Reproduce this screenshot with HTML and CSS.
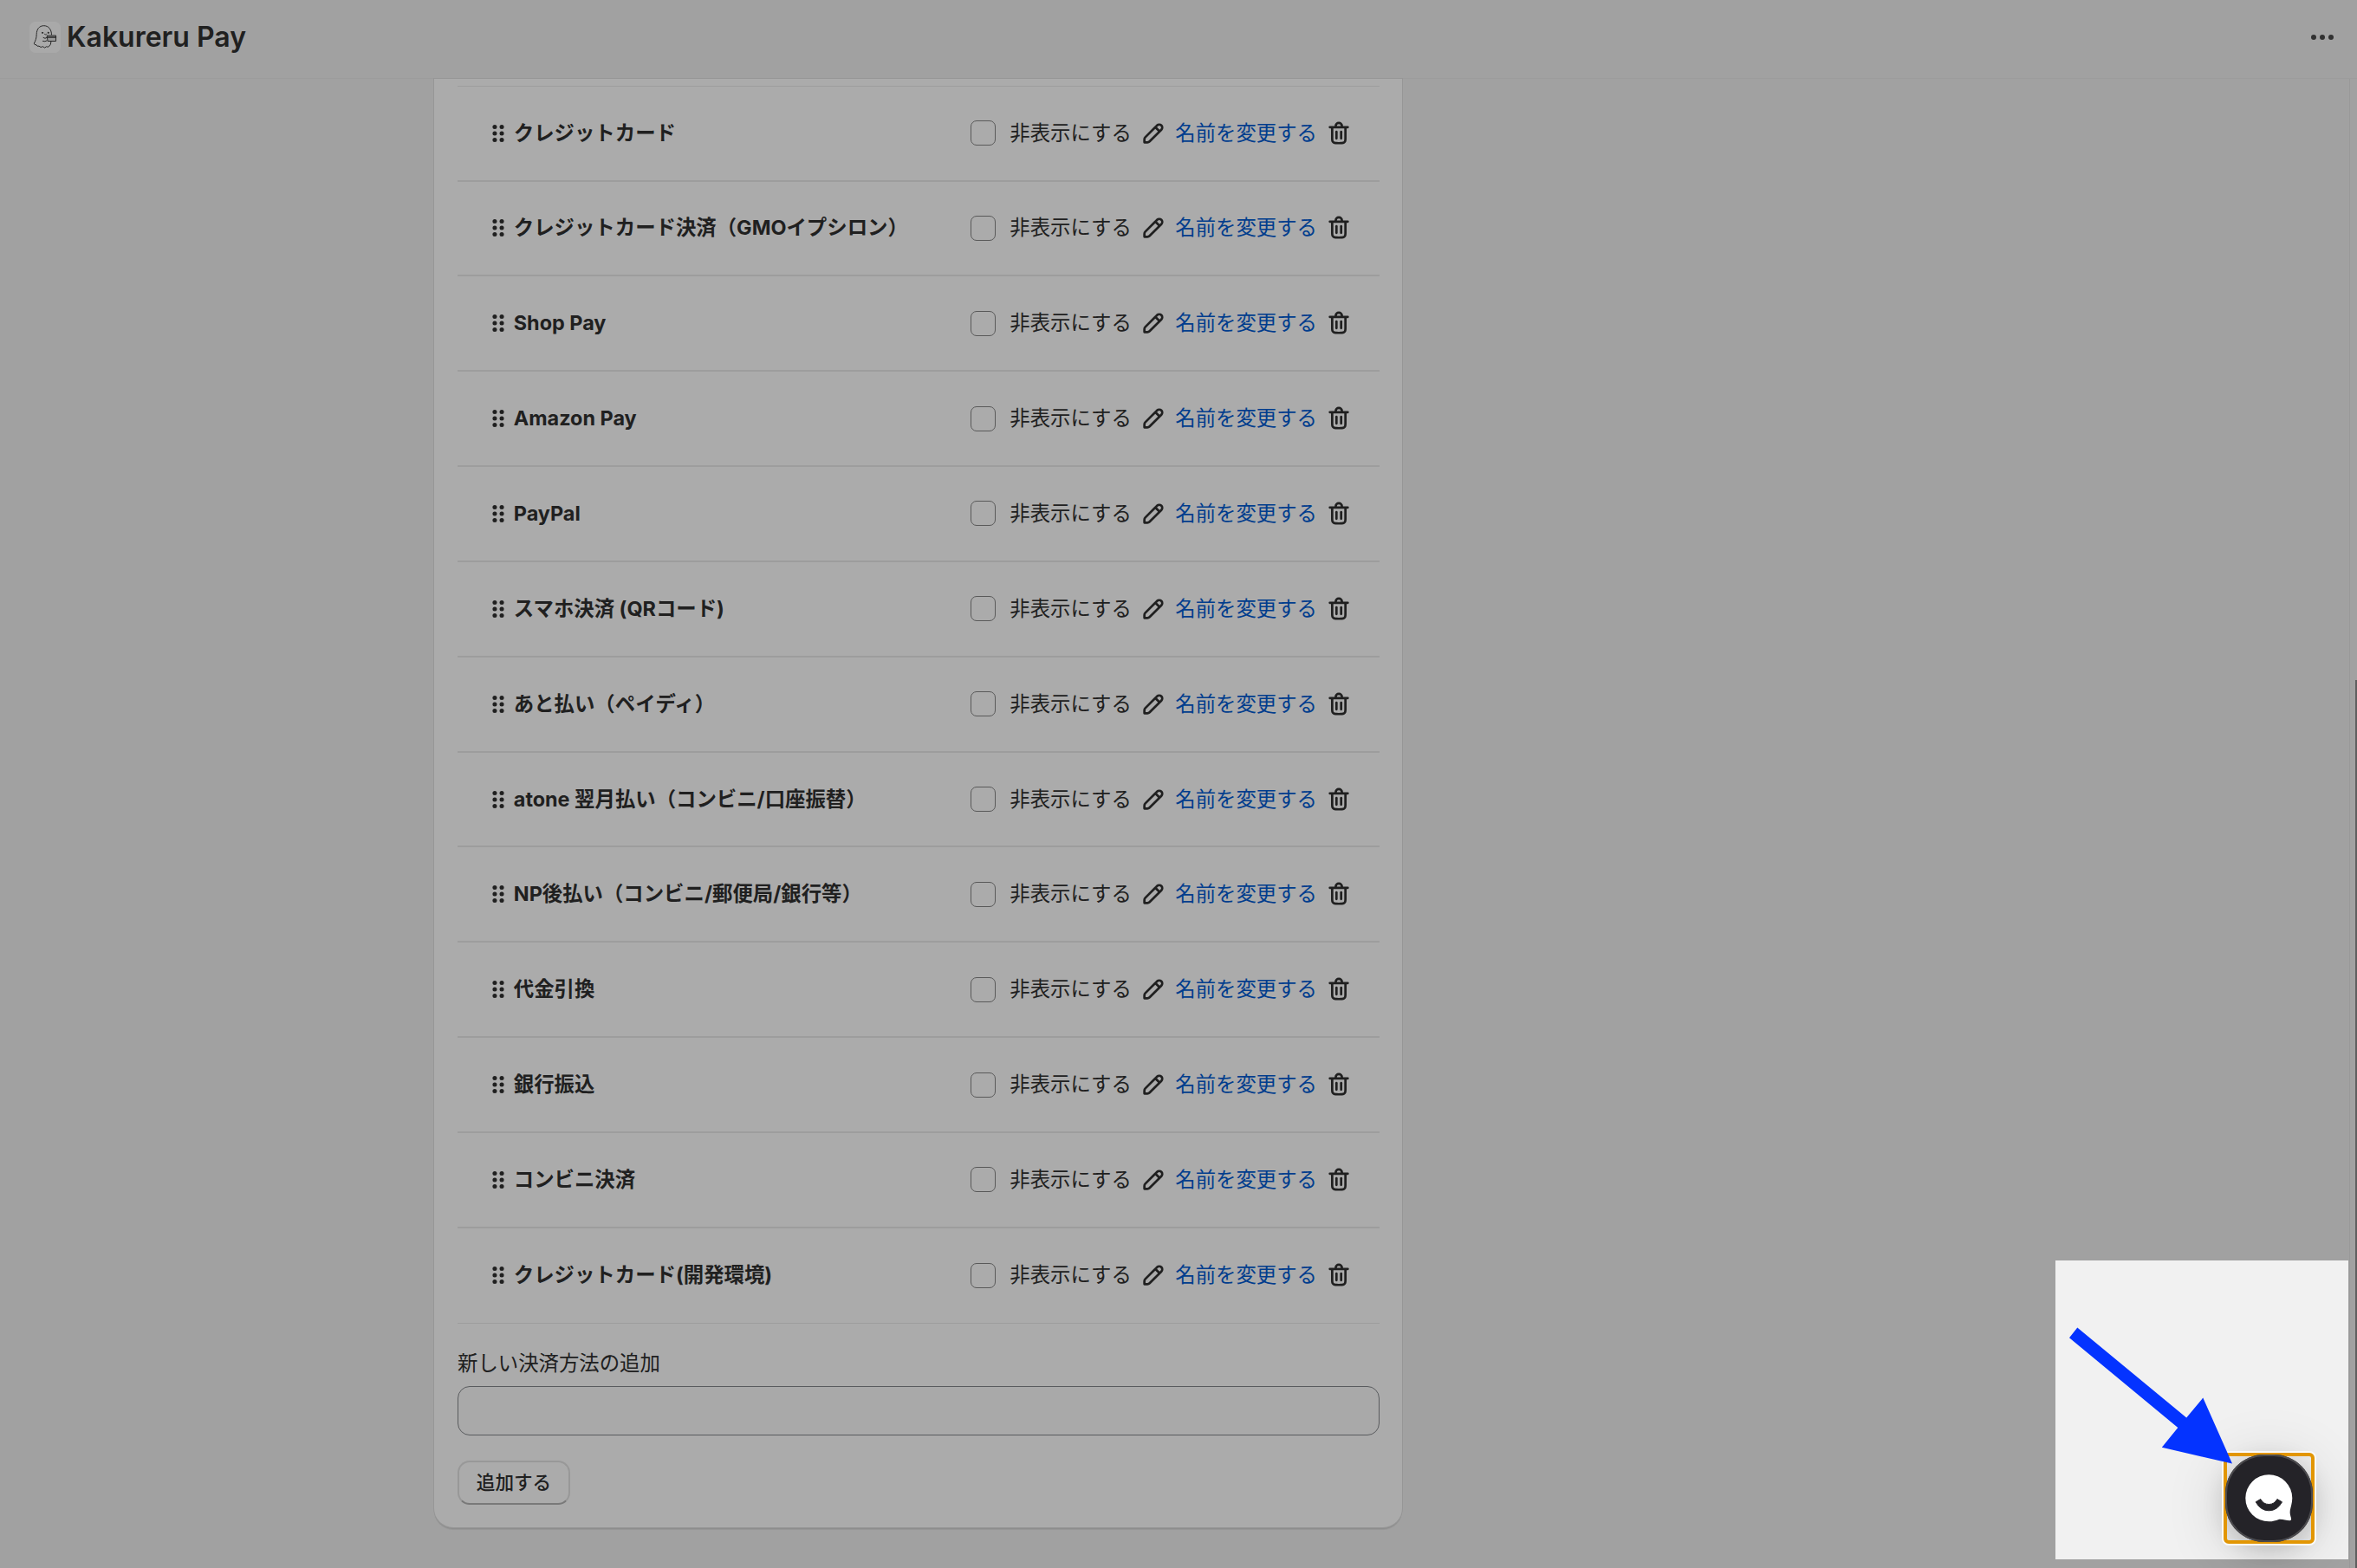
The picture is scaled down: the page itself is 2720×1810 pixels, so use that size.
FILE: index.html
```html
<!DOCTYPE html>
<html lang="ja">
<head>
<meta charset="utf-8">
<title>Kakureru Pay</title>
<link rel="stylesheet" href="styles.css">
</head>
<body>
<svg width="0" height="0" class="defs" aria-hidden="true">
  <symbol id="drag" viewBox="0 0 20 20">
    <circle cx="7.75" cy="5.8" r="1.4"/><circle cx="12.25" cy="5.8" r="1.4"/>
    <circle cx="7.75" cy="10" r="1.4"/><circle cx="12.25" cy="10" r="1.4"/>
    <circle cx="7.75" cy="14.2" r="1.4"/><circle cx="12.25" cy="14.2" r="1.4"/>
  </symbol>
  <symbol id="edit" viewBox="0 0 20 20">
    <path fill-rule="evenodd" d="M15.655 4.344a2.695 2.695 0 0 0-3.81 0l-.599.599-.009-.009-1.06 1.06.008.01-5.88 5.88a2.75 2.75 0 0 0-.805 1.944v1.922a.75.75 0 0 0 .75.75h1.922a2.75 2.75 0 0 0 1.944-.806l7.54-7.539a2.695 2.695 0 0 0 0-3.81Zm-4.409 2.72-5.88 5.88a1.25 1.25 0 0 0-.366.884v1.172h1.172c.331 0 .65-.132.883-.366l5.88-5.88-1.689-1.69Zm2.75.629.599-.599a1.195 1.195 0 1 0-1.69-1.689l-.598.599 1.69 1.689Z"/>
  </symbol>
  <symbol id="trash" viewBox="0 0 20 20">
    <path d="M11.5 8.25a.75.75 0 0 1 .75.75v4.25a.75.75 0 0 1-1.5 0v-4.25a.75.75 0 0 1 .75-.75Z"/>
    <path d="M9.25 9a.75.75 0 0 0-1.5 0v4.25a.75.75 0 0 0 1.5 0v-4.25Z"/>
    <path fill-rule="evenodd" d="M7.25 5.25a2.75 2.75 0 0 1 5.5 0h3a.75.75 0 0 1 0 1.5h-.75v5.45c0 1.68 0 2.52-.327 3.162a3 3 0 0 1-1.311 1.311c-.642.327-1.482.327-3.162.327h-.4c-1.68 0-2.52 0-3.162-.327a3 3 0 0 1-1.311-1.311c-.327-.642-.327-1.482-.327-3.162v-5.45h-.75a.75.75 0 0 1 0-1.5h3Zm1.5 0a1.25 1.25 0 1 1 2.5 0h-2.5Zm-2.25 1.5h7v5.45c0 .865-.001 1.423-.036 1.848-.033.408-.09.559-.128.633a1.5 1.5 0 0 1-.655.655c-.074.038-.225.095-.633.128-.425.035-.983.036-1.848.036h-.4c-.865 0-1.423-.001-1.848-.036-.408-.033-.559-.09-.633-.128a1.5 1.5 0 0 1-.656-.655c-.037-.074-.094-.225-.127-.633-.035-.425-.036-.983-.036-1.848v-5.45Z"/>
  </symbol>
</svg>

<header class="topbar">
  <span class="app-icon">
    <svg viewBox="0 0 36 36" fill="none" stroke="#3c3c3c" stroke-width="1" stroke-linecap="round" stroke-linejoin="round">
      <path d="M25.5 15C25.5 9 22 4.700 16.700 4.700C11 4.700 8.300 9 8.200 14.500C8.100 19 7 22 5.300 25.200Q5.600 27 8 26.800Q8.800 29 11 28.200Q13 30.500 15.500 28.700Q17.500 31.500 19.500 28.800Q22 30 23 28Q24.700 27 24.900 23.300"/>
      <path d="M16 18.500Q18 20.300 20 18.500M15.500 22.500Q18 23.500 20 22"/>
      <path d="M20.500 16H30.500V22.500H21.500Z" fill="#e6e6e6"/>
      <path d="M21 18H30.500" stroke-width="1.500"/>
      <circle cx="15" cy="12.800" r=".6" fill="#3c3c3c"/><circle cx="21.700" cy="12.800" r=".6" fill="#3c3c3c"/>
      <path d="M17.500 14.500Q18.500 15.500 19.500 14.500"/>
    </svg>
  </span>
  <h1 class="title">Kakureru Pay</h1>
  <button class="more" aria-label="メニュー"><i></i><i></i><i></i></button>
</header>

<main class="page">
  <section class="card">
    <ul class="methods" id="methods"></ul>
    <form class="add">
      <label class="label" for="new-method">新しい決済方法の追加</label>
      <input class="field" id="new-method" type="text">
      <button class="button" type="button">追加する</button>
    </form>
  </section>
</main>

<div class="thumb"></div>
<button class="chat" aria-label="チャット">
  <svg class="face" viewBox="0 0 101 101">
    <path fill="#fff" d="M50.300 23.300A27 27 0 0 0 50.300 77.300C55 77.300 58.500 76 61 75.200C65 74 69.500 76.300 74.500 76.300C76 76.300 76.300 75 76 73.500C75 70 74.300 67.500 74.800 64.500C75.300 61 77.300 56.500 77.300 50.300A27 27 0 0 0 50.300 23.300Z"/>
    <path fill="#242328" stroke="#242328" stroke-width="1" stroke-linejoin="round" d="M40.700 51.500Q44 57.500 50.300 57.500Q56.600 57.500 59.900 51.500L65.500 54.800Q60 64.800 50.300 64.800Q40.700 64.800 35.200 54.800Z"/>
  </svg>
</button>
<div class="spotlight"></div>
<svg class="arrow" viewBox="0 0 190 160"><path fill="#0433ff" d="M9.300 .600L135.200 104.400L154.300 81.600L188 157.500L106.800 138.700L125.300 116L0 12.200Z"/></svg>

<script src="app.js"></script>
</body>
</html>
```
FILE: styles.css
```css
* { box-sizing: border-box; }

body {
  margin: 0;
  height: 1810px;
  position: relative;
  overflow: hidden;
  display: flex;
  flex-direction: column;
  background: #f1f1f1;
  color: #303030;
  font-family: Inter, "Noto Sans CJK JP", sans-serif;
  font-size: 23.4px;
  line-height: 36px;
}

button { font: inherit; color: inherit; padding: 0; border: 0; background: none; }

.defs { position: absolute; }

.topbar {
  flex: none;
  height: 91px;
  padding: 0 27px 5px 34px;
  display: flex;
  align-items: center;
  border-bottom: 1px solid #e9e9e9;
}

.app-icon {
  width: 36px;
  height: 36px;
  border-radius: 7px;
  background: #fdfdfd;
}

.app-icon svg { display: block; }

.title {
  margin: 0 auto 0 7px;
  font-size: 32px;
  line-height: 40px;
  font-weight: 600;
}

.more { display: flex; gap: 4px; }
.more i { width: 6px; height: 6px; border-radius: 50%; background: #4a4a4a; }

.page {
  flex: 1;
  width: 2712px;
  padding-left: 501px;
  border-right: 1px solid #e5e5e5;
}

.card {
  width: 1117px;
  height: 1672px;
  padding: 7.7px 26px 0 27px;
  background: #fff;
  border-radius: 0 0 22px 22px;
  box-shadow: 0 0 0 1px #e0e0e0, 0 2px 0 0 #d2d2d2, 0 3px 1px 0 #dedede;
}

.methods {
  margin: 0;
  padding: 0;
  list-style: none;
  border-top: 1px solid #ebebeb;
}

.method {
  height: 109.85px;
  padding: 0 28.8px;
  display: flex;
  align-items: center;
  border-bottom: 2px solid #ebebeb;
}

.method:last-child { border-bottom-width: 1px; }

.icon { width: 36px; height: 36px; flex: none; fill: #303030; }

.name { font-weight: 650; margin-right: auto; white-space: pre; }

.hide { display: flex; align-items: center; margin-right: 7.2px; }

.box {
  width: 29px;
  height: 29px;
  margin: 0 16px 0 0;
  appearance: none;
  border: 1px solid #858585;
  border-radius: 7px;
}

.rename { margin: 0 7.2px; color: #005bd3; }

.add {
  display: flex;
  flex-direction: column;
  align-items: flex-start;
  padding-top: 28.2px;
}

.label { height: 36px; }

.field {
  width: 100%;
  height: 57px;
  margin: 8px 0 29px;
  border: 1px solid #85888c;
  border-radius: 14px;
  background: #fdfdfd;
}

.button {
  width: 130px;
  height: 51px;
  border-radius: 14px;
  border: 2px solid #e3e3e3;
  border-bottom-color: #b5b5b5;
  background: #fff;
  font-size: 21.6px;
  font-weight: 500;
}

.thumb {
  position: absolute;
  right: 0;
  top: 785px;
  width: 2px;
  height: 1025px;
  background: #8c8c8c;
}

.chat {
  position: absolute;
  left: 2568px;
  top: 1679px;
  width: 101px;
  height: 101px;
  isolation: isolate;
}

.face {
  display: block;
  border-radius: 45px;
  background: #242328;
  box-shadow: inset 0 0 0 2px #4b4a4d;
}

/* Soft shadow, under the focus ring */
.chat::before {
  content: "";
  position: absolute;
  z-index: -2;
  inset: 0;
  border-radius: 45px;
  box-shadow: 0 10px 72px rgba(0, 0, 0, .16), 0 8px 28px rgba(0, 0, 0, .16);
}

/* Focus ring: orange line with a white halo, behind the round button */
.chat::after {
  content: "";
  position: absolute;
  z-index: -1;
  inset: -2px;
  border: 4px solid #e29603;
  border-radius: 6px;
  box-shadow: 0 0 0 2px #fafafa;
}

/* Dims everything outside its own rectangle */
.spotlight {
  position: absolute;
  left: 2372px;
  top: 1455px;
  width: 338px;
  height: 345px;
  box-shadow: 0 0 0 3000px rgba(0, 0, 0, .33);
  pointer-events: none;
}

.arrow {
  position: absolute;
  left: 2388px;
  top: 1532px;
  width: 190px;
  height: 160px;
}
```
FILE: app.js
```js
const names = [
  'クレジットカード',
  'クレジットカード決済（GMOイプシロン）',
  'Shop Pay',
  'Amazon Pay',
  'PayPal',
  'スマホ決済 (QRコード)',
  'あと払い（ペイディ）',
  'atone 翌月払い（コンビニ/口座振替）',
  'NP後払い（コンビニ/郵便局/銀行等）',
  '代金引換',
  '銀行振込',
  'コンビニ決済',
  'クレジットカード(開発環境)',
];

document.getElementById('methods').innerHTML = names.map((name) => `
  <li class="method">
    <svg class="icon"><use href="#drag"/></svg>
    <span class="name">${name}</span>
    <label class="hide"><input class="box" type="checkbox">非表示にする</label>
    <svg class="icon"><use href="#edit"/></svg>
    <a class="rename">名前を変更する</a>
    <svg class="icon"><use href="#trash"/></svg>
  </li>`).join('');
```
